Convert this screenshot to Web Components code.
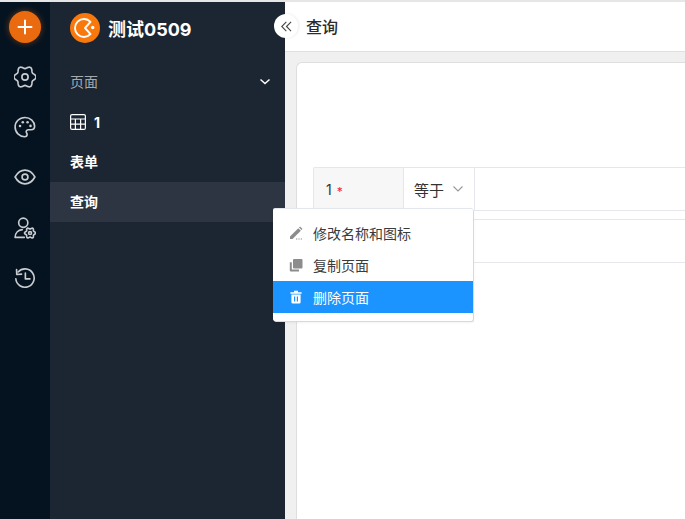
<!DOCTYPE html>
<html lang="zh">
<head>
<meta charset="utf-8">
<title>查询</title>
<style>
  html, body { margin: 0; height: 100%; overflow: hidden; }
  body { font-family: Inter, "Noto Sans CJK SC", sans-serif; background: #fff; }
</style>
</head>
<body>
<app-shell>
  <icon-rail slot="rail"></icon-rail>
  <page-sidebar slot="sidebar" app-name="测试0509"></page-sidebar>
  <query-main slot="main" page-title="查询"></query-main>
  <page-menu slot="overlay"></page-menu>
</app-shell>

<script>
class AppShell extends HTMLElement {
  constructor() {
    super();
    this.attachShadow({ mode: "open" });
    this.shadowRoot.innerHTML = /* html */`
      <style>
        :host { display: block; position: relative; width: 685px; height: 519px; overflow: hidden; border-top: 2px solid #e6e6e6; box-sizing: border-box; }
        .row { display: flex; height: 100%; }
      </style>
      <div class="row">
        <slot name="rail"></slot>
        <slot name="sidebar"></slot>
        <slot name="main"></slot>
      </div>
      <slot name="overlay"></slot>
    `;
  }
}

// six lobed outline used by the gear icons
function flowerPath(cx, cy, r, a) {
  let d = "";
  for (let i = 0; i < 72; i++) {
    const t = (i / 72) * Math.PI * 2;
    const rad = r + a * Math.cos(6 * t);
    d += `${i ? "L" : "M"}${(cx + rad * Math.cos(t)).toFixed(2)} ${(cy + rad * Math.sin(t)).toFixed(2)}`;
  }
  return d + "z";
}

const RAIL_ICONS = [
  // gear
  `<path d="${flowerPath(12, 12, 10.6, 1.4)}" stroke-linejoin="round"/><circle cx="12" cy="12" r="3.4"/>`,
  // palette
  `<path d="M12 1.6C5.8 1.6 1.2 6.2 1.2 12c0 6 4.8 10.6 10.4 10.6 1.8 0 2.7-1 2.7-2.3 0-1.5-1-2-1-3.2 0-1.3.9-2.1 2.3-2.1h3c2.5 0 3.9-1.6 3.9-3.7C22.5 5.8 17.8 1.6 12 1.6z" stroke-linejoin="round"/><g fill="#c9ccd0" stroke="none"><circle cx="6.6" cy="11" r="1.4"/><circle cx="9.6" cy="6.8" r="1.4"/><circle cx="14.8" cy="6.8" r="1.4"/><circle cx="18" cy="10.8" r="1.4"/></g>`,
  // eye
  `<path d="M1.2 12C4 7 7.7 4.5 12 4.5S20 7 22.8 12C20 17 16.3 19.5 12 19.5S4 17 1.2 12z" stroke-linejoin="round"/><circle cx="12" cy="12" r="3.2"/>`,
  // user with gear
  `<circle cx="10.1" cy="6.3" r="5"/><path d="M1.2 22.3c0-4.8 3.3-8.2 7.8-8.6M1.2 22.3h10" stroke-linecap="round"/><path d="${flowerPath(17.5, 17.5, 5.2, 0.8)}" stroke-linejoin="round"/><circle cx="17.5" cy="17.5" r="1.6"/>`,
  // history
  `<path d="M4.5 5.4A10 10 0 1 1 2 12.8" stroke-linecap="round"/><path d="M2.8 2.8l.2 5.4 5.2-.4" stroke-linecap="round" stroke-linejoin="round"/><path d="M12.4 6.6v6.4h5" stroke-linecap="round" stroke-linejoin="round"/>`
];

class IconRail extends HTMLElement {
  constructor() {
    super();
    this.attachShadow({ mode: "open" });
  }

  connectedCallback() {
    let innerHTML = /* html */`
      <style>
        :host { display: flex; flex-direction: column; align-items: center; flex: 0 0 50px; width: 50px; background: #051320; padding-top: 9px; box-sizing: border-box; }
        .add { flex: none; width: 32px; height: 32px; border-radius: 50%; background: #ea6b0f; box-shadow: 0 0 6px rgba(234,107,15,.45); display: flex; align-items: center; justify-content: center; margin-bottom: 8.5px; }
        .item { flex: none; width: 50px; height: 50.3px; display: flex; align-items: center; justify-content: center; }
        svg.ic { width: 22px; height: 22px; fill: none; stroke: #c9ccd0; stroke-width: 1.8; }
      </style>
      <div class="add">
        <svg width="16" height="16" viewBox="0 0 16 16"><path d="M8 1.5v13M1.5 8h13" stroke="#fff" stroke-width="2" stroke-linecap="round"/></svg>
      </div>
    `;
    for (const icon of RAIL_ICONS) {
      innerHTML += /* html */`<div class="item"><svg class="ic" viewBox="0 0 24 24">${icon}</svg></div>`;
    }
    this.shadowRoot.innerHTML = innerHTML;
  }
}

class PageSidebar extends HTMLElement {
  constructor() {
    super();
    this.attachShadow({ mode: "open" });
  }

  connectedCallback() {
    const name = this.getAttribute("app-name");
    this.shadowRoot.innerHTML = /* html */`
      <style>
        :host { display: block; flex: 0 0 235px; width: 235px; background: #1c2632; color: #fff; font-family: Inter, "Noto Sans CJK SC", sans-serif; }
        .brand { display: flex; align-items: center; gap: 8px; height: 52px; padding-left: 20px; font-size: 18px; font-weight: 700; }
        .logo { width: 30px; height: 30px; border-radius: 50%; background: #f9780b; display: block; }
        .group { display: flex; align-items: center; justify-content: space-between; height: 40px; margin-top: 8px; padding: 0 14px 0 20px; font-size: 14px; color: #a5a9ae; }
        .row { display: flex; align-items: center; gap: 8px; height: 40px; padding-left: 20px; font-size: 14px; font-weight: 700; }
        .row.active { background: #2e3542; }
        .cjk { margin-bottom: 2px; }
      </style>
      <div class="brand">
        <svg class="logo" viewBox="0 0 30 30" fill="none">
          <path d="M20.5 8.800A9 9 0 1 0 20.5 21.2L15 15z" stroke="#fff" stroke-width="1.9" stroke-linejoin="round"/>
          <circle cx="22.7" cy="14.5" r="1.7" fill="#fff"/>
        </svg>
        <span>${name}</span>
      </div>
      <div class="group">
        <span class="cjk">页面</span>
        <svg width="12" height="12" viewBox="0 0 12 12" fill="none"><path d="M1.5 3.5L6 7.5l4.500-4" stroke="#fff" stroke-width="1.5"/></svg>
      </div>
      <div class="row">
        <svg width="16" height="16" viewBox="0 0 16 16" fill="none" stroke="#fff" stroke-width="1.2"><rect x=".6" y=".6" width="14.8" height="14.8" rx="1.5"/><path d="M.6 5h14.8M.6 10.2h14.8M5.4 5v10.4M10.6 5v10.4"/></svg>
        <span>1</span>
      </div>
      <div class="row"><span class="cjk">表单</span></div>
      <div class="row active"><span class="cjk">查询</span></div>
    `;
  }
}

class QueryMain extends HTMLElement {
  constructor() {
    super();
    this.attachShadow({ mode: "open" });
  }

  connectedCallback() {
    this.shadowRoot.innerHTML = /* html */`
      <style>
        :host { display: flex; flex-direction: column; flex: 1; min-width: 0; position: relative; background: #f0f0f0; color: #333; font-family: Inter, "Noto Sans CJK SC", sans-serif; }
        header { height: 49px; flex: none; box-sizing: border-box; background: #fff; border-bottom: 1px solid #e0e0e0; display: flex; align-items: center; padding: 0 0 2px 21px; height: 50px; font-size: 16px; font-weight: 500; color: #2b2b2b; }
        .collapse { position: absolute; left: -11px; top: 12px; width: 24px; height: 24px; border-radius: 50%; background: #fff; box-shadow: 1px 0 3px rgba(0,0,0,.08); display: flex; align-items: center; justify-content: center; }
        .card { flex: 1; margin: 10px 0 0 11px; background: #fff; border: 1px solid #dedede; border-width: 1px 0 0 1px; border-radius: 6px 0 0 0; padding: 104px 0 0 16px; }
        .query { border: 1px solid #e5e7ec; border-right: 0; border-radius: 2px 0 0 0; }
        .line { display: flex; height: 42px; }
        .field { width: 90px; background: #f7f7f7; border-right: 1px solid #e5e7ec; display: flex; align-items: center; padding-left: 12px; box-sizing: border-box; font-size: 14px; }
        .req { color: #f5222d; font-size: 12px; margin: 4px 0 0 5px; }
        .op { width: 71px; border-right: 1px solid #e5e7ec; display: flex; align-items: center; gap: 9px; padding-left: 10px; box-sizing: border-box; font-size: 15px; }
        .second { height: 42px; margin-top: 8px; border: 1px solid #e5e7ec; border-width: 1px 0; }
      </style>
      <header>${this.getAttribute("page-title")}</header>
      <div class="collapse">
        <svg width="11" height="11" viewBox="0 0 12 12" fill="none" stroke="#444" stroke-width="1.2"><path d="M5.8 1L.8 6l5 5M11 1L6 6l5 5"/></svg>
      </div>
      <div class="card">
        <div class="query">
          <div class="line">
            <div class="field">1<span class="req">*</span></div>
            <div class="op">等于
              <svg width="10" height="10" viewBox="0 0 10 10" fill="none" stroke="#999" stroke-width="1.1"><path d="M.5 2.5L5 7l4.5-4.5"/></svg>
            </div>
          </div>
        </div>
        <div class="second"></div>
      </div>
    `;
  }
}

class MenuItem extends HTMLElement {
  constructor() {
    super();
    this.attachShadow({ mode: "open" });
    this.shadowRoot.innerHTML = /* html */`
      <style>
        :host { display: flex; align-items: center; gap: 10px; height: 32px; padding-left: 16px; font-size: 14px; color: #3b3b3b; }
        :host([selected]) { background: #1c94ff; color: #fff; }
        ::slotted(svg) { flex: none; }
      </style>
      <slot name="icon"></slot>
      <slot></slot>
    `;
  }
}

class PageMenu extends HTMLElement {
  constructor() {
    super();
    this.attachShadow({ mode: "open" });
    this.shadowRoot.innerHTML = /* html */`
      <style>
        :host { display: block; position: absolute; left: 273px; top: 207px; width: 200px; padding: 8px 0; background: #fff; border-radius: 2px; box-shadow: 0 -1px 0 #e3e6ec, 1px 1px 0 #d5d9e2, 0 1px 3px rgba(0,0,0,.1); font-family: Inter, "Noto Sans CJK SC", sans-serif; }
      </style>
      <menu-item>
        <svg slot="icon" width="14" height="14" viewBox="0 0 14 14" fill="#8c8c8c"><path d="M1 10.5L9.3 2.2l2.5 2.5L3.5 13H1z"/><path d="M10 1.5l1-1 2.5 2.5-1 1z"/><path d="M7 12.4h1.2v1H7zM9.4 12.4h1.2v1H9.4zM11.8 12.4H13v1h-1.2z"/></svg>
        修改名称和图标
      </menu-item>
      <menu-item>
        <svg slot="icon" width="14" height="14" viewBox="0 0 14 14" fill="#8c8c8c"><rect x="4" y="1" width="9.5" height="9.5" rx="1"/><path d="M.8 4.2h2v7.2H10v2H1.8a1 1 0 0 1-1-1z"/></svg>
        复制页面
      </menu-item>
      <menu-item selected>
        <svg slot="icon" width="14" height="14" viewBox="0 0 14 14" fill="#fff"><path fill-rule="evenodd" d="M5 .8h4v1.4h3.6v1.6H1.4V2.2H5zM2.4 4.6h9.2v7.600a1.4 1.4 0 0 1-1.4 1.4H3.8a1.4 1.4 0 0 1-1.4-1.4zM5 6.4v5h1.2v-5zm2.800 0v5H9v-5z"/></svg>
        删除页面
      </menu-item>
    `;
  }
}

customElements.define("app-shell", AppShell);
customElements.define("icon-rail", IconRail);
customElements.define("page-sidebar", PageSidebar);
customElements.define("query-main", QueryMain);
customElements.define("menu-item", MenuItem);
customElements.define("page-menu", PageMenu);
</script>
</body>
</html>
